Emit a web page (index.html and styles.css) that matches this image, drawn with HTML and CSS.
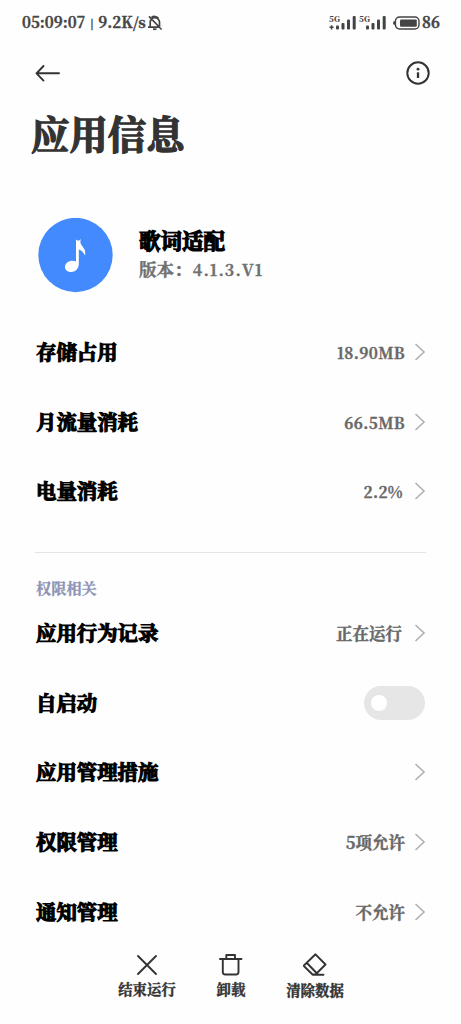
FILE: index.html
```html
<!DOCTYPE html>
<html lang="zh-CN">
<head>
<meta charset="utf-8">
<title>应用信息</title>
<link rel="stylesheet" href="styles.css">
</head>
<body>
<header class="status">
  <span class="clock">05:09:07 <span class="pipe">|</span> 9.2K/s</span>
  <svg class="bell" width="16" height="16" viewBox="0 0 16 16" fill="none" stroke="#444" stroke-width="1.7"><path d="M1 12.200h12.500M3.200 12V7.500a4.600 4.600 0 0 1 9.300-.5v4M4.500 2.400a5 5 0 0 1 7 1.200M2 1.300l12.600 13.200"/><path d="M6 14.200h3.500"/></svg>
  <span class="grow"></span>
  <span class="signal"><b class="net">5G</b><svg width="28" height="16" viewBox="0 0 28 16" fill="#444"><path d="M3.300 10.300v1.300h1.300v1.500H3.300v1.300H1.800v-1.300H.5v-1.500h1.300v-1.300z"/><rect x="7" y="10.500" width="3" height="4" rx="1"/><rect x="12.500" y="8" width="3" height="6.500" rx="1"/><rect x="18" y="4.500" width="3" height="10" rx="1"/><rect x="23.700" y="1" width="3" height="13.500" rx="1"/></svg></span>
  <span class="signal second"><b class="net">5G</b><svg width="28" height="16" viewBox="0 0 28 16" fill="#444"><rect x="7" y="10.500" width="3" height="4" rx="1"/><rect x="12.500" y="8" width="3" height="6.500" rx="1"/><rect x="18" y="4.500" width="3" height="10" rx="1"/><rect x="23.700" y="1" width="3" height="13.500" rx="1"/></svg></span>
  <svg class="battery" width="27" height="14" viewBox="0 0 27 14"><path d="M0 7q0-2 2-2v4q-2 0-2-2z" fill="#444"/><rect x="2.400" y="1" width="23.600" height="12" rx="4.200" fill="none" stroke="#444" stroke-width="1.400"/><rect x="7" y="3.400" width="16.800" height="7.300" rx="1.200" fill="#444"/></svg>
  <span class="level">86</span>
</header>
<nav class="bar">
  <svg width="26" height="18" viewBox="0 0 26 18" fill="none" stroke="#333" stroke-width="1.900" stroke-linecap="round" stroke-linejoin="round"><path d="M24 9.300H1.500M8.500 2L1.500 9.300 8.500 16.600"/></svg>
  <svg width="24" height="24" viewBox="0 0 24 24" fill="none" stroke="#333" stroke-width="2"><circle cx="12" cy="12" r="10.700"/><path d="M12 11.300v5.700" stroke-width="2.300"/><circle cx="12" cy="8.200" r="1.400" fill="#333" stroke="none"/></svg>
</nav>
<h1 class="title">应用信息</h1>
<section class="app">
  <svg width="75" height="75" viewBox="0 0 75 75"><circle cx="37.500" cy="37" r="37.200" fill="#448aff"/><path d="M38 21.500Q40.500 24 43 21Q41.200 25.500 44.500 28.500Q48 32 47 37.500Q44.500 32.500 40.800 31.500V44.500C41.300 50.500 37.500 54 33 54C29 54 26.700 51.500 27 48.500C27.500 44 33 41.500 38 43.500z" fill="#fff"/></svg>
  <div class="about"><div class="name">歌词适配</div><div class="version">版本：<span class="num">4.1.3.V1</span></div></div>
</section>
<main class="list">
  <div class="row"><span class="label">存储占用</span><span class="value num">18.90MB</span><svg class="chev" width="12" height="20" viewBox="0 0 12 20"><path d="M1.500 2l8.500 8-8.500 8"/></svg></div>
  <div class="row"><span class="label">月流量消耗</span><span class="value num">66.5MB</span><svg class="chev" width="12" height="20" viewBox="0 0 12 20"><path d="M1.500 2l8.500 8-8.500 8"/></svg></div>
  <div class="row"><span class="label">电量消耗</span><span class="value num inset">2.2%</span><svg class="chev" width="12" height="20" viewBox="0 0 12 20"><path d="M1.500 2l8.500 8-8.500 8"/></svg></div>
  <hr class="rule">
  <h2 class="group">权限相关</h2>
  <div class="row"><span class="label">应用行为记录</span><span class="value far">正在运行</span><svg class="chev" width="12" height="20" viewBox="0 0 12 20"><path d="M1.500 2l8.500 8-8.500 8"/></svg></div>
  <div class="row"><span class="label">自启动</span><span class="switch"></span></div>
  <div class="row"><span class="label">应用管理措施</span><svg class="chev" width="12" height="20" viewBox="0 0 12 20"><path d="M1.500 2l8.500 8-8.500 8"/></svg></div>
  <div class="row"><span class="label">权限管理</span><span class="value">5项允许</span><svg class="chev" width="12" height="20" viewBox="0 0 12 20"><path d="M1.500 2l8.500 8-8.500 8"/></svg></div>
  <div class="row"><span class="label">通知管理</span><span class="value">不允许</span><svg class="chev" width="12" height="20" viewBox="0 0 12 20"><path d="M1.500 2l8.500 8-8.500 8"/></svg></div>
</main>
<footer class="actions">
  <div class="action"><svg width="24" height="24" viewBox="0 0 24 24"><path d="M3 3l18 18M21 3L3 21"/></svg><span>结束运行</span></div>
  <div class="action"><svg width="24" height="24" viewBox="0 0 24 24"><path d="M1 6h21.500M7.300 6V2h8.700v4M3.800 6v13q0 2.500 2.500 2.500h10.700q2.500 0 2.500-2.500V6"/></svg><span>卸载</span></div>
  <div class="action low"><svg width="24" height="24" viewBox="0 0 24 24"><path d="M12.500 1.300L22.500 11.500 12.500 21.500H9.500L.6 12.700zM3.900 10L14.500 21M10 21.800h10.500"/></svg><span>清除数据</span></div>
</footer>
</body>
</html>
```
FILE: styles.css
```css
* { box-sizing: border-box; }
body {
  margin: 0;
  width: 461px;
  height: 1024px;
  overflow: hidden;
  background: #fefefe;
  color: #333;
  font-family: "Noto Serif CJK SC", "Liberation Serif", "Noto Sans CJK SC", serif;
  font-weight: 700;
  white-space: nowrap;
}
svg { display: block; flex: none; }
.status { display: flex; align-items: center; height: 46px; padding: 0 22px; color: #444; }
.clock { width: 122px; font-size: 15px; line-height: 18px; padding-bottom: 2px; -webkit-text-stroke: .4px #444; }
.pipe { display: inline-block; padding: 0 1px; font-size: 10px; vertical-align: 1px; }
.bell { margin-left: 3px; }
.grow { flex: 1; }
.signal { position: relative; display: block; width: 28px; margin-right: 2px; }
.second { margin-right: 6px; }
.net { position: absolute; left: 0; top: 0; font-size: 8px; line-height: 8px; }
.battery { margin-right: 2px; }
.level { width: 17px; font-size: 15px; line-height: 18px; padding-bottom: 2px; -webkit-text-stroke: .4px #444; }
.bar { display: flex; justify-content: space-between; align-items: center; height: 54px; padding: 0 31px 0 35px; }
.title { margin: 6px 0 0 31px; font-size: 38.400px; line-height: 54px; font-weight: 700; -webkit-text-stroke: 1.300px #333; }
.app { display: flex; margin: 58px 0 0 38px; gap: 26px; }
.about { padding-top: 8px; }
.name { font-size: 21.500px; line-height: 28px; color: #000; -webkit-text-stroke: 1.200px #000; }
.version { font-size: 17.600px; line-height: 29px; color: #707070; -webkit-text-stroke: .4px #707070; }
.version .num { margin-left: 1px; font-size: 16px; letter-spacing: 1.100px; }
.list { padding: 24px 35px 0 36px; }
.row { display: flex; align-items: center; height: 69.700px; }
.label { flex: 1; font-size: 20.400px; line-height: 30px; color: #000; -webkit-text-stroke: 1.100px #000; }
.value { margin-right: 9px; font-size: 16.500px; line-height: 24px; color: #686868; -webkit-text-stroke: .4px #686868; }
.value.num { font-size: 15.300px; letter-spacing: .350px; }
.inset { margin-right: 11px; }
.far { margin-right: 12px; }
.chev { fill: none; stroke: #b0b0b0; stroke-width: 1.600; }
.rule { height: 1px; margin: 26px 0 0 -1px; border: 0; background: #e4e4e4; }
.group { margin: 24px 0 0; font-size: 15.200px; line-height: 21px; color: #8d94b5; -webkit-text-stroke: .3px #8d94b5; }
.switch { width: 61px; height: 34px; border-radius: 17px; background: #e6e6e6; padding: 9px 7px; margin-right: 1px; }
.switch::before { content: ""; display: block; width: 16px; height: 16px; border-radius: 50%; background: #fff; }
.actions { display: flex; width: 252px; margin: 6px 0 0 105px; }
.action { width: 84px; display: flex; flex-direction: column; align-items: center; font-size: 14.400px; line-height: 22px; -webkit-text-stroke: .4px #333; }
.action svg { fill: none; stroke: #333; stroke-width: 1.900; stroke-linejoin: round; stroke-linecap: round; }
.action span { padding-top: 1px; }
.low span { padding-top: 2px; }
```
